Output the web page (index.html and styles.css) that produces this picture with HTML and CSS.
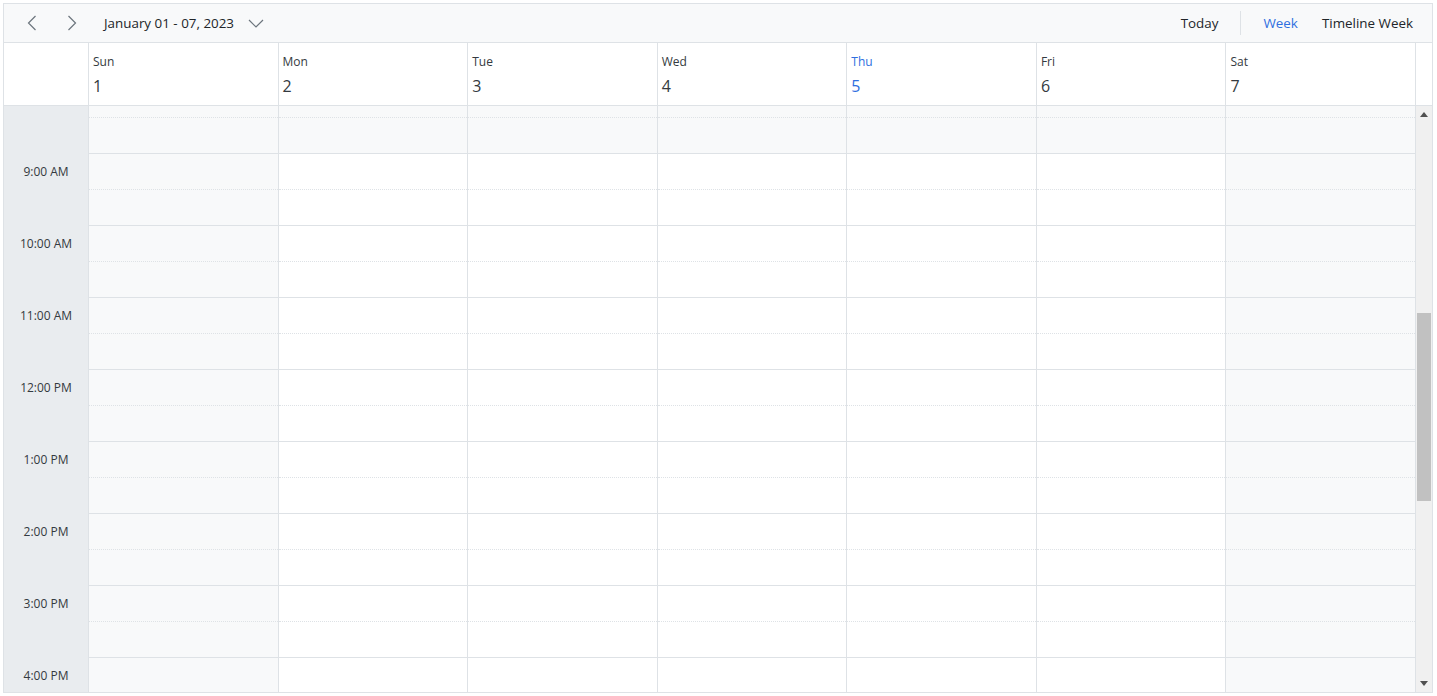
FILE: index.html
```html
<!DOCTYPE html>
<html lang="en">
<head>
  <meta charset="UTF-8">
  <title>Scheduler - Week</title>
  <link rel="stylesheet" href="styles.css">
</head>
<body>

<div class="scheduler">
  <!-- toolbar -->
  <div class="toolbar">
    <div class="tool-left">
      <button class="icon-btn" title="Previous">
        <svg width="10" height="16" viewBox="0 0 10 16"><path d="M8.5 1 L1.5 8 L8.5 15" fill="none" stroke="#6c757d" stroke-width="1.2"/></svg>
      </button>
      <button class="icon-btn" title="Next">
        <svg width="10" height="16" viewBox="0 0 10 16"><path d="M1.5 1 L8.5 8 L1.5 15" fill="none" stroke="#6c757d" stroke-width="1.2"/></svg>
      </button>
      <button class="date-btn">
        <span>January 01 - 07, 2023</span>
        <svg width="16" height="9" viewBox="0 0 16 9"><path d="M1 1 L8 8 L15 1" fill="none" stroke="#6c757d" stroke-width="1.2"/></svg>
      </button>
    </div>
    <div class="tool-right">
      <button class="text-btn">Today</button>
      <span class="sep"></span>
      <button class="text-btn active">Week</button>
      <button class="text-btn">Timeline Week</button>
    </div>
  </div>

  <!-- date header -->
  <div class="head-row">
    <div class="head-corner"></div>
    <div class="head-days">
      <div class="day-head"><div class="day-name">Sun</div><div class="day-date">1</div></div>
      <div class="day-head"><div class="day-name">Mon</div><div class="day-date">2</div></div>
      <div class="day-head"><div class="day-name">Tue</div><div class="day-date">3</div></div>
      <div class="day-head"><div class="day-name">Wed</div><div class="day-date">4</div></div>
      <div class="day-head today"><div class="day-name">Thu</div><div class="day-date">5</div></div>
      <div class="day-head"><div class="day-name">Fri</div><div class="day-date">6</div></div>
      <div class="day-head"><div class="day-name">Sat</div><div class="day-date">7</div></div>
    </div>
    <div class="head-spacer"></div>
  </div>

  <!-- work area -->
  <div class="work-area">
    <div class="time-col">
      <div class="time-inner" id="times"></div>
    </div>
    <div class="days">
      <div class="days-inner" id="days"></div>
    </div>
    <div class="scrollbar">
      <div class="sb-btn">
        <svg width="8" height="5" viewBox="0 0 8 5"><path d="M0 5 L4 0 L8 5 Z" fill="#505050"/></svg>
      </div>
      <div class="sb-track"><div class="sb-thumb"></div></div>
      <div class="sb-btn">
        <svg width="8" height="5" viewBox="0 0 8 5"><path d="M0 0 L8 0 L4 5 Z" fill="#505050"/></svg>
      </div>
    </div>
  </div>
</div>

<script>
  const times = document.getElementById('times');
  const days = document.getElementById('days');

  // rows from 8:00 AM to 5:00 PM are enough for the visible part
  const startHour = 8;
  const endHour = 17;

  function label(h) {
    const suffix = h < 12 ? 'AM' : 'PM';
    const hh = h % 12 === 0 ? 12 : h % 12;
    return `${hh}:00 ${suffix}`;
  }

  // 8:00 AM label is scrolled out of view, start the labels at 9
  for (let h = startHour + 1; h < endHour; h++) {
    const t = document.createElement('div');
    t.className = 'time-cell';
    t.innerHTML = `<span>${label(h)}</span>`;
    times.appendChild(t);
  }

  for (let d = 0; d < 7; d++) {
    const col = document.createElement('div');
    col.className = 'day-col';
    const weekend = d === 0 || d === 6;
    for (let h = startHour; h < endHour; h++) {
      for (let half = 0; half < 2; half++) {
        const cell = document.createElement('div');
        cell.className = 'cell ' + (half ? 'half' : 'hour');
        if (weekend || h < 9 || h >= 18) cell.classList.add('off');
        col.appendChild(cell);
      }
    }
    days.appendChild(col);
  }
</script>
</body>
</html>
```

FILE: styles.css
```css
body {
  margin: 0;
  font-family: "Segoe UI", "Open Sans", sans-serif;
  color: #212529;
  background: #fff;
}

button {
  font-family: inherit;
  background: none;
  border: none;
  padding: 0;
  cursor: pointer;
  color: inherit;
}

.scheduler {
  margin: 3px;
  width: 1430px;
  height: 690px;
  box-sizing: border-box;
  border: 1px solid #dee2e6;
  display: flex;
  flex-direction: column;
}

/* toolbar */
.toolbar {
  height: 39px;
  box-sizing: border-box;
  background: #f8f9fa;
  border-bottom: 1px solid #dee2e6;
  display: flex;
  align-items: center;
  justify-content: space-between;
  padding: 0 7px 0 12px;
}

.tool-left,
.tool-right {
  display: flex;
  align-items: center;
}

.icon-btn {
  width: 32px;
  height: 30px;
  display: flex;
  align-items: center;
  justify-content: center;
  margin-right: 8px;
}

.date-btn {
  display: flex;
  align-items: center;
  gap: 14px;
  padding: 0 8px;
  height: 30px;
  font-size: 13.4px;
  color: #212529;
}

.text-btn {
  font-size: 13.4px;
  padding: 0 12px;
  height: 30px;
  color: #212529;
}

.text-btn.active {
  color: #2f6fe0;
}

.sep {
  width: 1px;
  height: 24px;
  background: #dee2e6;
  margin: 0 10px;
}

/* header */
.head-row {
  display: flex;
  height: 63px;
  box-sizing: border-box;
  border-bottom: 1px solid #dee2e6;
}

.head-corner {
  width: 84px;
}

.head-days {
  flex: 1;
  display: flex;
  border-right: 1px solid #dee2e6;
}

.day-head {
  flex: 1;
  border-left: 1px solid #dee2e6;
  padding: 11px 0 0 4px;
}

.day-name {
  font-size: 12px;
  line-height: 16px;
  color: #343a40;
}

.day-date {
  font-size: 16px;
  line-height: 20px;
  margin-top: 6px;
  color: #343a40;
}

.day-head.today .day-name,
.day-head.today .day-date {
  color: #2f6fe0;
}

.head-spacer {
  width: 16px;
}

/* work area */
.work-area {
  flex: 1;
  display: flex;
  overflow: hidden;
}

.time-col {
  width: 84px;
  background: #e9ecef;
  overflow: hidden;
}

.time-inner {
  margin-top: 48px;
}

.time-cell {
  height: 72px;
  display: flex;
  justify-content: center;
}

.time-cell span {
  display: block;
  height: 36px;
  line-height: 36px;
  font-size: 12px;
  color: #343a40;
}

.days {
  flex: 1;
  overflow: hidden;
  border-right: 1px solid #dee2e6;
}

.days-inner {
  display: flex;
  margin-top: -25px;
}

.day-col {
  flex: 1;
  border-left: 1px solid #dee2e6;
  display: flex;
  flex-direction: column;
}

.cell {
  height: 36px;
  box-sizing: border-box;
  background: #fff;
}

.cell.hour {
  border-top: 1px solid #dee2e6;
}

.cell.half {
  border-top: 1px dotted #dee2e6;
}

.cell.off {
  background: #f8f9fa;
}

/* scrollbar */
.scrollbar {
  width: 16px;
  background: #f0f0f0;
  display: flex;
  flex-direction: column;
}

.sb-btn {
  height: 17px;
  display: flex;
  align-items: center;
  justify-content: center;
}

.sb-track {
  flex: 1;
  padding: 0 1px;
}

.sb-thumb {
  margin-top: 190px;
  height: 188px;
  background: #c1c1c1;
}
```
